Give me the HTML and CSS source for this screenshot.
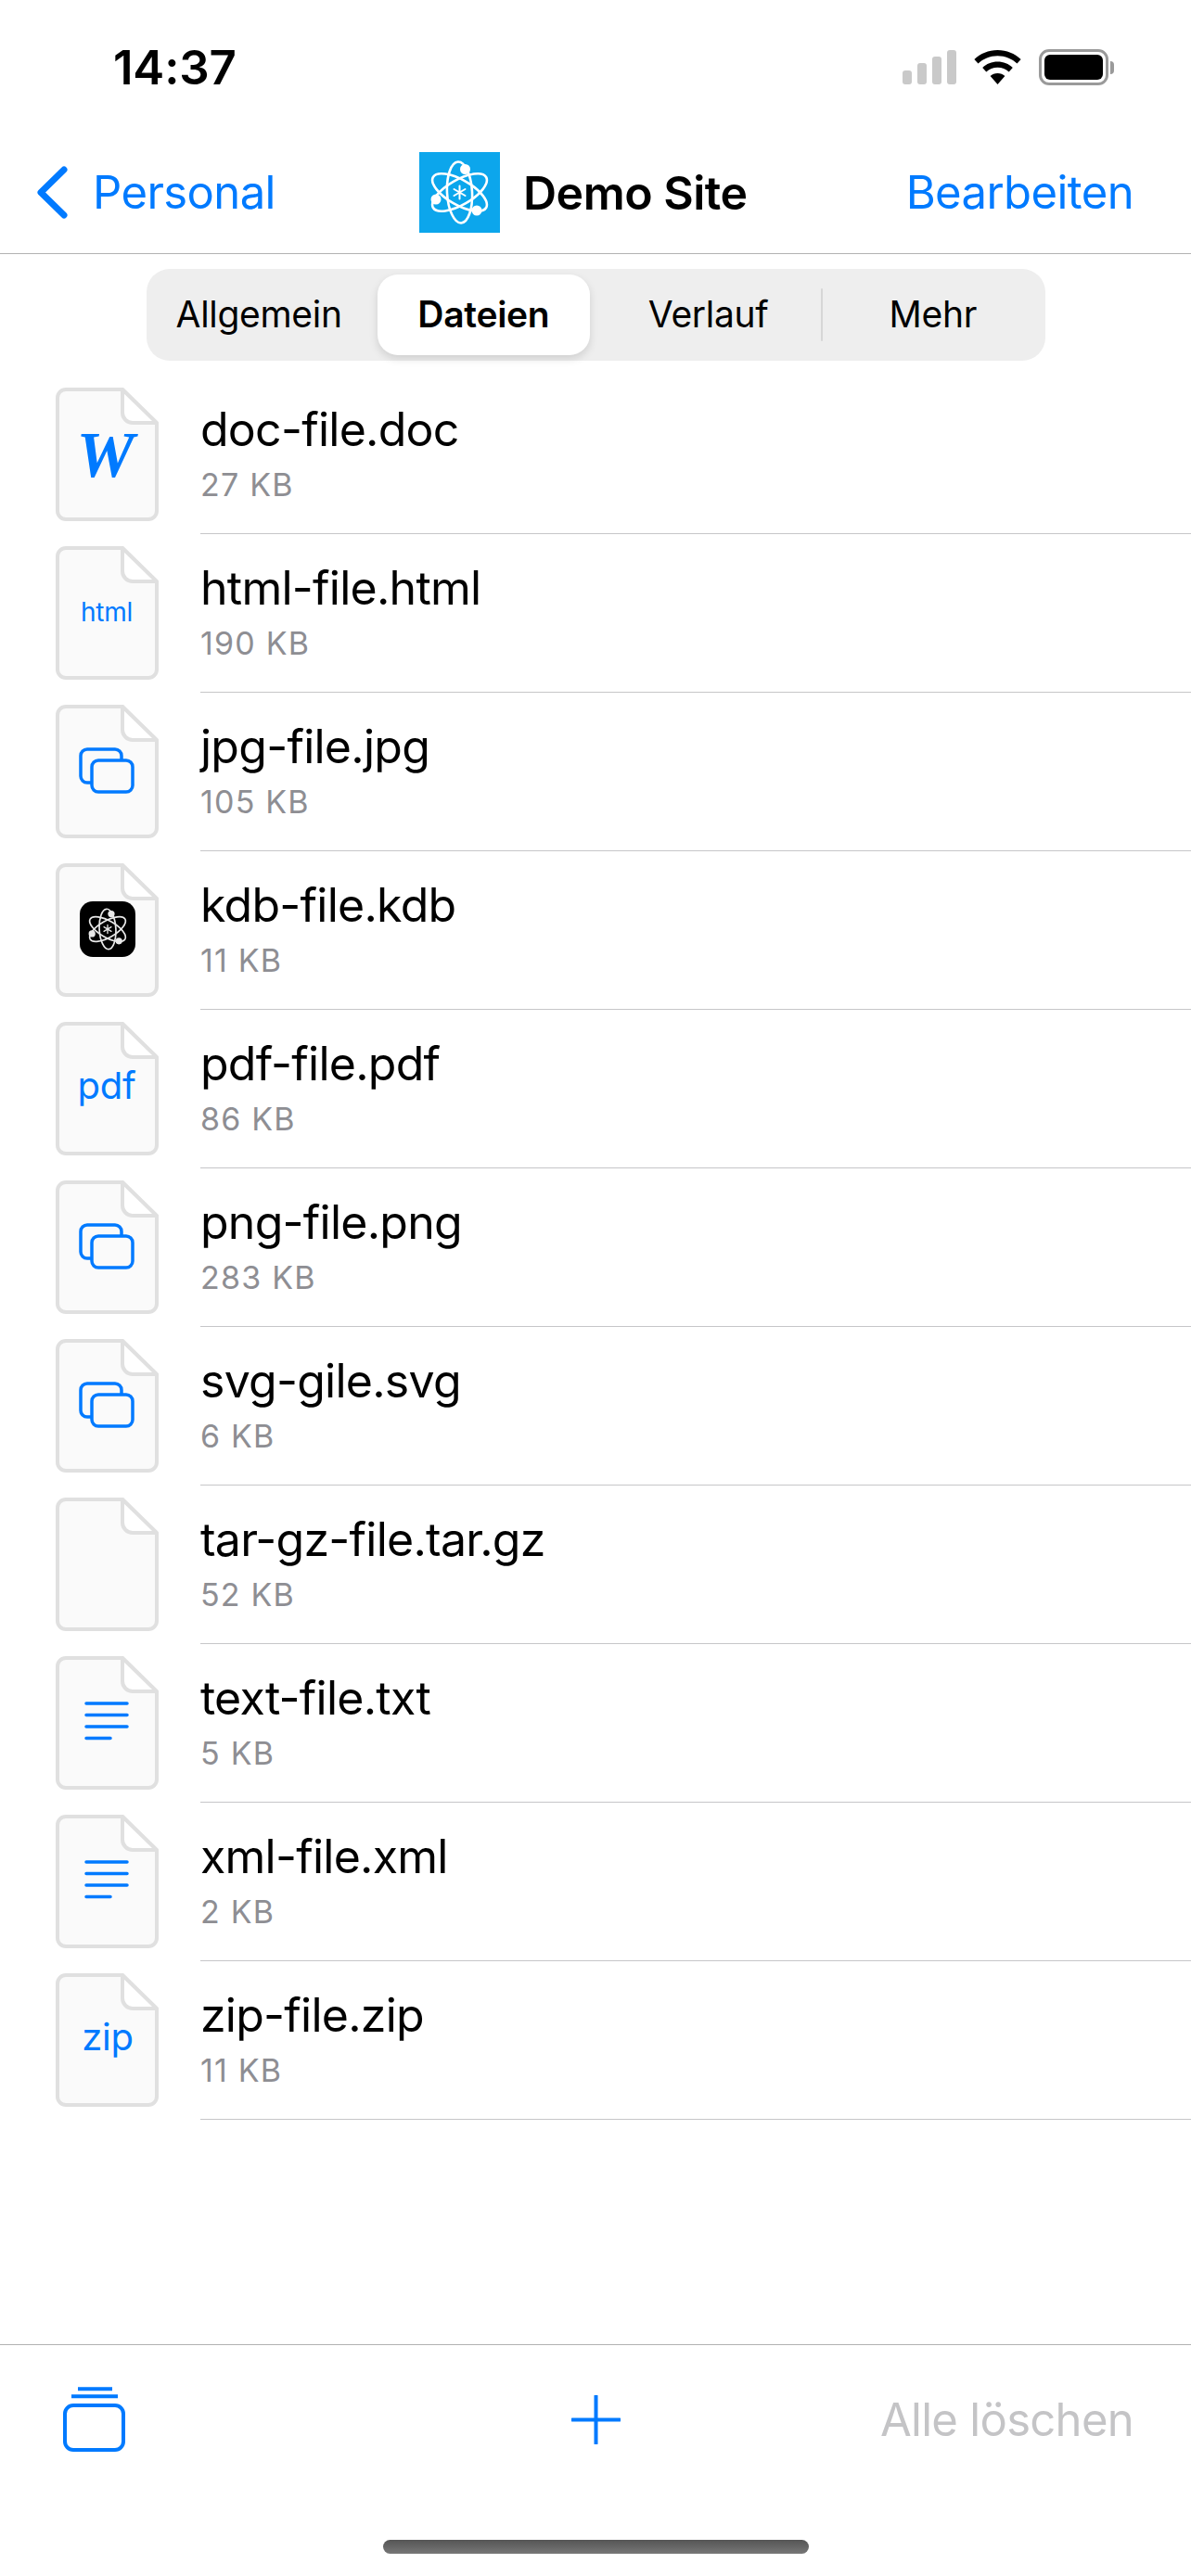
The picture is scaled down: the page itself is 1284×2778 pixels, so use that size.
FILE: index.html
```html
<!DOCTYPE html>
<html lang="de">
<head>
<meta charset="utf-8">
<title>Demo Site</title>
<link rel="stylesheet" href="styles.css">
</head>
<body>
<svg class="defs" width="0" height="0" aria-hidden="true">
  <symbol id="atom" viewBox="-43.5 -43.5 87 87">
    <g fill="none" stroke="currentColor" stroke-width="2.6">
      <ellipse rx="13.500" ry="33" transform="rotate(-3)"/>
      <ellipse rx="13.500" ry="33" transform="rotate(-60)"/>
      <ellipse rx="13.500" ry="33" transform="rotate(60)"/>
      <path d="M0 -7V7M-6 -3.500L6 3.500M-6 3.500L6 -3.500" stroke-width="2" stroke-linecap="round"/>
    </g>
    <g fill="currentColor">
      <circle cx="6" cy="-25" r="5.5"/>
      <circle cx="-25.500" cy="7.500" r="5.500"/>
      <circle cx="18.500" cy="19.500" r="5.500"/>
    </g>
  </symbol>
  <symbol id="file" viewBox="0 0 111 144">
    <path class="sheet" d="M11 2H72L109 39V133A9 9 0 0 1 100 142H11A9 9 0 0 1 2 133V11A9 9 0 0 1 11 2Z"/>
    <path class="fold" d="M72 2V27A11 11 0 0 0 83 38H109Z"/>
  </symbol>
  <symbol id="images" viewBox="0 0 60 50">
    <path fill="none" stroke="currentColor" stroke-width="3.500" d="M14 38H9A7 7 0 0 1 2 31V9A7 7 0 0 1 9 2H39A7 7 0 0 1 46 9V13"/>
    <rect x="14" y="14" width="44" height="34" rx="7" fill="none" stroke="currentColor" stroke-width="3.500"/>
  </symbol>
  <symbol id="lines" viewBox="0 0 48 42">
    <path fill="none" stroke="currentColor" stroke-width="3.500" stroke-linecap="round" d="M2 2H46M2 14.500H46M2 27H46M2 39.500H28"/>
  </symbol>
</svg>

<div class="page">
  <header class="status">
    <span class="time">14:37</span>
    <div class="status-icons">
      <div class="signal"><i class="b1"></i><i class="b2"></i><i class="b3"></i><i class="b4"></i></div>
      <svg class="wifi" width="51" height="37" viewBox="0 0 51 37">
        <path d="M25.500 0C35.300 0 44 3.800 50.600 10L46.500 14.600C41 9.400 33.600 6.300 25.500 6.300S10 9.400 4.500 14.600L.4 10C7 3.800 15.700 0 25.500 0Z"/>
        <path d="M25.500 12.500C31.800 12.500 37.500 14.900 41.800 18.900L37.700 23.400C34.500 20.500 30.200 18.700 25.500 18.700S16.500 20.500 13.300 23.400L9.200 18.900C13.500 14.900 19.200 12.500 25.500 12.500Z"/>
        <path d="M25.500 25C28.600 25 31.300 26.100 33.400 28L25.500 37L17.600 28C19.700 26.100 22.400 25 25.500 25Z"/>
      </svg>
      <div class="battery"><div class="battery-body"><div class="battery-fill"></div></div><div class="battery-cap"></div></div>
    </div>
  </header>

  <nav class="nav">
    <a class="back">
      <svg class="chevron" width="33" height="57" viewBox="0 0 33 57"><path d="M29 4L4 28.500L29 53" fill="none" stroke="currentColor" stroke-width="7" stroke-linecap="round" stroke-linejoin="round"/></svg>
      <span>Personal</span>
    </a>
    <div class="title">
      <div class="logo"><svg width="87" height="87"><use href="#atom"/></svg></div>
      <span>Demo Site</span>
    </div>
    <a class="edit">Bearbeiten</a>
  </nav>

  <div class="segments">
    <div class="seg">Allgemein</div>
    <div class="seg active">Dateien</div>
    <div class="seg">Verlauf</div>
    <div class="seg divided">Mehr</div>
  </div>

  <ul class="list">
    <li class="row">
      <div class="file"><svg class="file-bg" width="111" height="144"><use href="#file"/></svg><span class="glyph word">W</span></div>
      <div class="info"><div class="name">doc-file.doc</div><div class="size">27 KB</div></div>
    </li>
    <li class="row">
      <div class="file"><svg class="file-bg" width="111" height="144"><use href="#file"/></svg><span class="glyph ext-small">html</span></div>
      <div class="info"><div class="name">html-file.html</div><div class="size">190 KB</div></div>
    </li>
    <li class="row">
      <div class="file"><svg class="file-bg" width="111" height="144"><use href="#file"/></svg><svg class="glyph pic" width="60" height="50"><use href="#images"/></svg></div>
      <div class="info"><div class="name">jpg-file.jpg</div><div class="size">105 KB</div></div>
    </li>
    <li class="row">
      <div class="file"><svg class="file-bg" width="111" height="144"><use href="#file"/></svg><div class="glyph kdb"><svg width="60" height="60" viewBox="-2 -2 91 91"><use href="#atom" width="87" height="87"/></svg></div></div>
      <div class="info"><div class="name">kdb-file.kdb</div><div class="size">11 KB</div></div>
    </li>
    <li class="row">
      <div class="file"><svg class="file-bg" width="111" height="144"><use href="#file"/></svg><span class="glyph ext">pdf</span></div>
      <div class="info"><div class="name">pdf-file.pdf</div><div class="size">86 KB</div></div>
    </li>
    <li class="row">
      <div class="file"><svg class="file-bg" width="111" height="144"><use href="#file"/></svg><svg class="glyph pic" width="60" height="50"><use href="#images"/></svg></div>
      <div class="info"><div class="name">png-file.png</div><div class="size">283 KB</div></div>
    </li>
    <li class="row">
      <div class="file"><svg class="file-bg" width="111" height="144"><use href="#file"/></svg><svg class="glyph pic" width="60" height="50"><use href="#images"/></svg></div>
      <div class="info"><div class="name">svg-gile.svg</div><div class="size">6 KB</div></div>
    </li>
    <li class="row">
      <div class="file"><svg class="file-bg" width="111" height="144"><use href="#file"/></svg></div>
      <div class="info"><div class="name">tar-gz-file.tar.gz</div><div class="size">52 KB</div></div>
    </li>
    <li class="row">
      <div class="file"><svg class="file-bg" width="111" height="144"><use href="#file"/></svg><svg class="glyph txt" width="48" height="42"><use href="#lines"/></svg></div>
      <div class="info"><div class="name">text-file.txt</div><div class="size">5 KB</div></div>
    </li>
    <li class="row">
      <div class="file"><svg class="file-bg" width="111" height="144"><use href="#file"/></svg><svg class="glyph txt" width="48" height="42"><use href="#lines"/></svg></div>
      <div class="info"><div class="name">xml-file.xml</div><div class="size">2 KB</div></div>
    </li>
    <li class="row">
      <div class="file"><svg class="file-bg" width="111" height="144"><use href="#file"/></svg><span class="glyph ext zip">zip</span></div>
      <div class="info"><div class="name">zip-file.zip</div><div class="size">11 KB</div></div>
    </li>
  </ul>

  <footer class="toolbar">
    <div class="tools">
      <svg class="stack" width="67" height="70" viewBox="0 0 67 70">
        <path d="M16 2.200H53M9 10.200H59" stroke="currentColor" stroke-width="4" fill="none"/>
        <rect x="2" y="20" width="63" height="48" rx="9" fill="none" stroke="currentColor" stroke-width="4"/>
      </svg>
      <svg class="plus" width="53" height="53" viewBox="0 0 53 53"><path d="M26.500 1V52M1 26.500H52" stroke="currentColor" stroke-width="4" stroke-linecap="round" fill="none"/></svg>
      <span class="clear">Alle löschen</span>
    </div>
    <div class="home"></div>
  </footer>
</div>
</body>
</html>
```
FILE: styles.css
```css
* { box-sizing: border-box; }
html, body { margin: 0; padding: 0; background: #fff; }
body { font-family: Inter, "Liberation Sans", sans-serif; color: #000; width: 1284px; height: 2778px; overflow: hidden; }
.defs { position: absolute; }
.page { width: 1284px; height: 2778px; display: flex; flex-direction: column; }

.status { height: 142px; flex: none; display: flex; justify-content: space-between; padding: 48px 83px 0 122px; }
.time { font-size: 51px; font-weight: 600; line-height: 50px; letter-spacing: -.2px; }
.status-icons { display: flex; align-items: flex-start; padding-top: 6px; }
.signal { display: flex; align-items: flex-end; gap: 6px; height: 37px; width: 58px; margin-right: 19px; }
.signal i { display: block; width: 10px; background: #c9c9c9; border-radius: 3px; }
.signal .b1 { height: 15px; }
.signal .b2 { height: 23px; }
.signal .b3 { height: 30px; }
.signal .b4 { height: 37px; }
.wifi { fill: #000; margin-right: 19px; }
.battery { display: flex; align-items: center; margin-top: -1px; }
.battery-body { width: 75px; height: 39px; border: 3px solid #9a9a9a; border-radius: 11px; padding: 3px; }
.battery-fill { width: 100%; height: 100%; background: #000; border-radius: 6px; }
.battery-cap { width: 4px; height: 14px; background: #9a9a9a; border-radius: 0 4px 4px 0; margin-left: 2px; }

.nav { height: 132px; flex: none; display: flex; align-items: center; justify-content: space-between; padding: 0 62px 0 40px; border-bottom: 1px solid #b2b2b2; font-size: 49px; letter-spacing: -.6px; }
.back { display: flex; align-items: center; gap: 27px; color: #007aff; }
.chevron { flex: none; }
.title { display: flex; align-items: center; gap: 25px; font-weight: 600; margin-right: 16px; font-size: 50px; letter-spacing: -.5px; }
.logo { width: 87px; height: 87px; background: #0ca6ec; color: #fff; }
.logo svg { display: block; }
.edit { color: #007aff; letter-spacing: -.6px; }

.segments { flex: none; margin: 16px 0 16px 158px; width: 969px; height: 99px; background: #eeeeee; border-radius: 25px; display: grid; grid-template-columns: repeat(4, 1fr); align-items: center; font-size: 39px; letter-spacing: -.3px; text-align: center; }
.seg { height: 87px; line-height: 85px; position: relative; }
.seg.active { background: #fff; border-radius: 22px; margin: 0 7px; font-weight: 600; box-shadow: 0 4px 10px rgba(0, 0, 0, .13); }
.seg.divided::before { content: ""; position: absolute; left: 0; top: 15px; width: 2px; height: 57px; background: #d6d6d6; border-radius: 1px; }

.list { list-style: none; margin: 0; padding: 0; flex: none; }
.row { height: 171px; display: flex; align-items: center; padding-left: 60px; }
.file { position: relative; width: 111px; height: 144px; flex: none; margin: -1px 45px 0 0; }
.file-bg { display: block; }
.sheet { fill: #fafafa; stroke: #e0e0e0; stroke-width: 4; }
.fold { fill: #fff; stroke: #e0e0e0; stroke-width: 4; stroke-linejoin: round; }
.glyph { position: absolute; color: #007aff; }
.word { left: -4px; right: 0; top: 38px; text-align: center; font: italic 700 70px/70px "Liberation Serif", serif; }
.ext-small { left: -1px; right: 0; top: 51px; text-align: center; font-size: 28px; line-height: 40px; letter-spacing: -.2px; }
.ext { left: -1px; right: 0; top: 46px; text-align: center; font-size: 40px; line-height: 46px; letter-spacing: -.3px; }
.zip { left: 1px; }
.pic { left: 25px; top: 46px; }
.txt { left: 31px; top: 49px; }
.kdb { left: 26px; top: 41px; width: 60px; height: 60px; background: #000; border-radius: 14px; color: #e8e8e8; }
.kdb svg { display: block; }

.info { flex: 1; height: 100%; border-bottom: 1px solid #c6c6c8; padding: 28px 0 0; }
.name { font-size: 50px; line-height: 60px; letter-spacing: -.75px; }
.size { font-size: 34px; line-height: 40px; letter-spacing: 1.2px; color: #8e8e93; margin-top: 10px; }

.toolbar { margin-top: auto; flex: none; border-top: 1px solid #b2b2b2; height: 250px; display: flex; flex-direction: column; }
.tools { height: 160px; display: grid; grid-template-columns: 1fr auto 1fr; align-items: center; padding: 0 62px; color: #007aff; flex: none; }
.stack { margin-left: 6px; }
.clear { justify-self: end; color: #c4c4c6; font-size: 49px; letter-spacing: -.7px; }
.home { width: 459px; height: 15px; margin: 50px auto 0; border-radius: 8px; background: linear-gradient(#555, #777); }
```
